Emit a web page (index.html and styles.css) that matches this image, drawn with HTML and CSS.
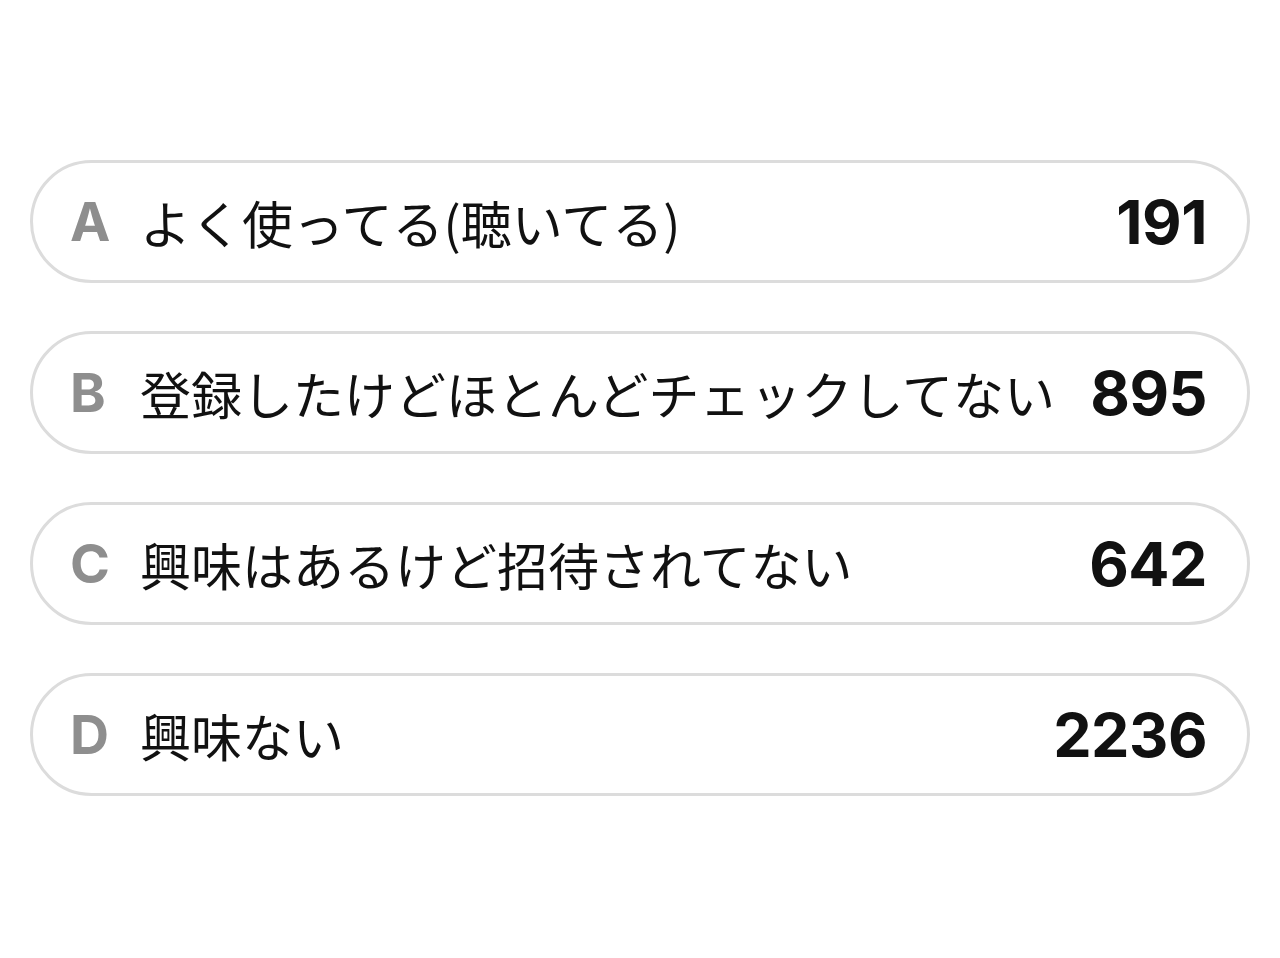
FILE: index.html
```html
<!DOCTYPE html>
<html lang="ja">
<head>
    <meta charset="UTF-8">
    <meta name="viewport" content="width=device-width, initial-scale=1.0">
    <title>Poll Results</title>
    <link rel="stylesheet" href="styles.css">
</head>
<body>
    <div class="poll">
        <div class="option">
            <span class="letter">A</span>
            <span class="label">よく使ってる(聴いてる)</span>
            <span class="count">191</span>
        </div>
        <div class="option">
            <span class="letter">B</span>
            <span class="label">登録したけどほとんどチェックしてない</span>
            <span class="count">895</span>
        </div>
        <div class="option">
            <span class="letter">C</span>
            <span class="label">興味はあるけど招待されてない</span>
            <span class="count">642</span>
        </div>
        <div class="option">
            <span class="letter">D</span>
            <span class="label">興味ない</span>
            <span class="count">2236</span>
        </div>
    </div>
</body>
</html>
```

FILE: styles.css
```css
body {
    margin: 0;
    background-color: #fff;
    font-family: 'Noto Sans CJK JP', sans-serif;
}

.poll {
    display: flex;
    flex-direction: column;
    gap: 48px;
    padding: 160px 30px 0;
}

.option {
    display: flex;
    align-items: center;
    height: 117px;
    padding: 0 40px 0 37px;
    border: 3px solid #dcdcdc;
    border-radius: 62px;
}

.letter {
    width: 70px;
    flex-shrink: 0;
    font-family: 'Inter', sans-serif;
    font-size: 54px;
    font-weight: 700;
    color: #8e8e8e;
}

.label {
    flex: 1;
    font-size: 51px;
    font-weight: 400;
    color: #111;
    white-space: nowrap;
}

.count {
    font-family: 'Inter', sans-serif;
    font-size: 61px;
    font-weight: 700;
    color: #111;
    letter-spacing: -0.5px;
}
```
